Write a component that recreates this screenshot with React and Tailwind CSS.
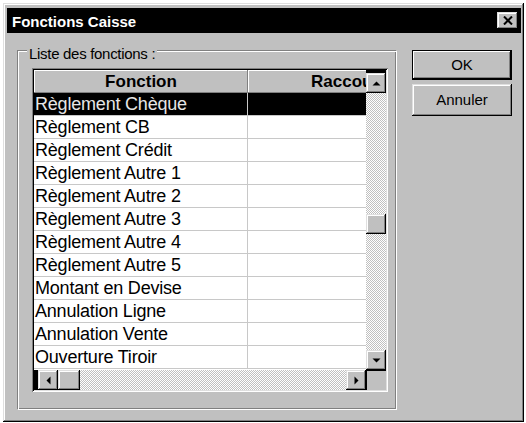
import React from "react";

// Win95 style bevels
const raised = "shadow-[inset_-1px_-1px_#000,inset_1px_1px_#dfdfdf,inset_-2px_-2px_#808080,inset_2px_2px_#fff]";
const track = "bg-[image:repeating-conic-gradient(#c0c0c0_0_25%,#ffffff_0_50%)] bg-[length:2px_2px]";

const rows = [
  "Règlement Chèque",
  "Règlement CB",
  "Règlement Crédit",
  "Règlement Autre 1",
  "Règlement Autre 2",
  "Règlement Autre 3",
  "Règlement Autre 4",
  "Règlement Autre 5",
  "Montant en Devise",
  "Annulation Ligne",
  "Annulation Vente",
  "Ouverture Tiroir",
];

const arrows = {
  up: "0.5,6.5 8.5,6.5 4.5,2.5",
  down: "0.5,2.5 8.5,2.5 4.5,6.5",
  left: "6.5,0.5 6.5,8.5 2.5,4.5",
  right: "2.5,0.5 2.5,8.5 6.5,4.5",
};

const Arrow = ({ dir }) => (
  <svg width="9" height="9" viewBox="0 0 9 9">
    <polygon points={arrows[dir]} fill="#000" />
  </svg>
);

const ScrollButton = ({ dir, className = "" }) => (
  <div className={`flex items-center justify-center bg-[#c0c0c0] ${raised} ${className}`}>
    <Arrow dir={dir} />
  </div>
);

const App = () => {
  return (
    <div className="w-[526px] h-[423px] bg-white pt-[3px] pl-[3px] font-['Liberation_Sans',Arial,sans-serif] text-black">
      <div className={`w-[521px] h-[419px] bg-[#c0c0c0] pt-[5px] pl-[4px] pr-[3px] ${raised}`}>
        {/* title bar */}
        <div className="h-[25px] bg-black flex items-center justify-between pl-[5px] pr-[3px]">
          <span className="text-white font-bold text-[15px] leading-[25px] pt-[2px]">Fonctions Caisse</span>
          <div className={`w-[21px] h-[17px] bg-[#c0c0c0] flex items-center justify-center ${raised}`}>
            <svg width="10" height="9" viewBox="0 0 10 9">
              <path d="M1 0.5 L9 8.5 M9 0.5 L1 8.5" stroke="#000" strokeWidth="2" />
            </svg>
          </div>
        </div>

        <div className="flex items-start gap-[15px] pl-[10px] mt-[17px]">
          {/* group box */}
          <div className="relative w-[380px] h-[360px] border border-t-[#808080] border-l-[#808080] border-r-white border-b-white shadow-[inset_1px_1px_#fff,inset_-1px_-1px_#808080] pl-[14px] pt-[17px]">
            <span className="absolute -top-[5px] left-[9px] bg-[#c0c0c0] px-[2px] text-[15px] leading-[16px] tracking-[-0.3px]">
              Liste des fonctions :
            </span>

            {/* grid */}
            <div className="w-[356px] h-[324px] p-[2px] bg-white shadow-[inset_1px_1px_#808080,inset_-1px_-1px_#fff,inset_2px_2px_#000,inset_-2px_-2px_#dfdfdf]">
              <div className="w-[352px] h-[320px] flex flex-col">
                <div className="flex h-[300px]">
                  <div className="w-[332px] flex flex-col overflow-hidden bg-white">
                    <div className="flex h-[23px] shrink-0 bg-[#c0c0c0] text-[17px] font-bold leading-[23px]">
                      <div className="w-[214px] shrink-0 text-center shadow-[inset_-1px_-1px_#808080,inset_1px_1px_#fff]">
                        Fonction
                      </div>
                      <div className="flex-1 whitespace-nowrap overflow-hidden pl-[63px] shadow-[inset_0_-1px_#808080,inset_1px_1px_#fff]">
                        Raccourci
                      </div>
                    </div>
                    {rows.map((name, index) => {
                      const selected = index === 0;
                      return (
                        <div
                          key={index}
                          className={`flex h-[23px] shrink-0 text-[18px] leading-[22px] border-b border-[#c8c8c8] ${
                            selected ? "bg-black text-[#e6e6e6]" : "bg-white text-black"
                          }`}
                        >
                          <div className="w-[214px] shrink-0 pl-[1px] border-r border-[#c8c8c8] whitespace-nowrap tracking-[-0.2px]">
                            {name}
                          </div>
                          <div className="flex-1" />
                        </div>
                      );
                    })}
                  </div>

                  {/* vertical scrollbar */}
                  <div className="w-[20px] flex flex-col">
                    <div className="h-[3px] bg-black" />
                    <ScrollButton dir="up" className="h-[20px] shrink-0" />
                    <div className={`flex-1 ${track}`}>
                      <div className={`mt-[121px] h-[20px] bg-[#c0c0c0] ${raised}`} />
                    </div>
                    <ScrollButton dir="down" className="h-[20px] shrink-0" />
                  </div>
                </div>

                {/* horizontal scrollbar */}
                <div className="flex h-[20px]">
                  <div className="w-[4px] bg-black" />
                  <ScrollButton dir="left" className="w-[20px] shrink-0" />
                  <div className={`w-[22px] shrink-0 bg-[#c0c0c0] ${raised}`} />
                  <div className={`flex-1 ${track}`} />
                  <ScrollButton dir="right" className="w-[20px] shrink-0" />
                  <div className="w-[20px] bg-[#c0c0c0] border-l border-t border-black" />
                </div>
              </div>
            </div>
          </div>

          {/* buttons */}
          <div className="flex flex-col gap-[4px] w-[100px]">
            <button className="h-[30px] bg-[#c0c0c0] text-[15px] shadow-[inset_0_0_0_1px_#000,inset_-2px_-2px_#000,inset_2px_2px_#fff,inset_-3px_-3px_#808080]">
              OK
            </button>
            <button className={`h-[32px] bg-[#c0c0c0] text-[15px] ${raised}`}>Annuler</button>
          </div>
        </div>
      </div>
    </div>
  );
};

export default App;
